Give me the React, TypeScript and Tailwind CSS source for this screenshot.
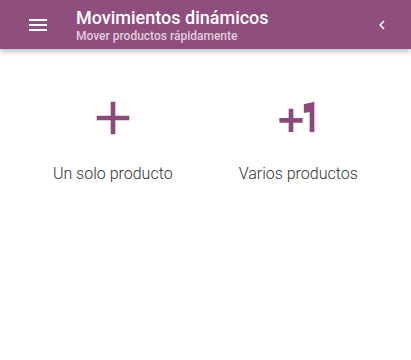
import React from "react";

function MenuIcon() {
  return (
    <svg width="24" height="24" viewBox="0 0 24 24" fill="white">
      <path d="M3 18h18v-2H3v2zm0-5h18v-2H3v2zm0-7v2h18V6H3z" />
    </svg>
  );
}

function ChevronLeft() {
  return (
    <svg width="18" height="18" viewBox="0 0 24 24" fill="white">
      <path d="M15.41 7.41L14 6l-6 6 6 6 1.41-1.41L10.83 12z" />
    </svg>
  );
}

function AddIcon() {
  return (
    <svg width="56" height="56" viewBox="0 0 24 24" fill="#8c4a7c">
      <path d="M19 13h-6v6h-2v-6H5v-2h6V5h2v6h6v2z" />
    </svg>
  );
}

function PlusOneIcon() {
  return (
    <svg width="56" height="56" viewBox="0 0 24 24" fill="#8c4a7c">
      <path d="M10 8H8v4H4v2h4v4h2v-4h4v-2h-4zm4.5-1.92V9.9l2.5-.5V18h2V5z" />
    </svg>
  );
}

export default function App() {
  return (
    <div
      className="w-[411px] h-[360px] bg-white overflow-hidden"
      style={{ fontFamily: "Roboto, 'Noto Sans', sans-serif" }}
    >
      <header className="h-[49px] bg-[#8e4f7e] flex items-center shadow-[0_2px_6px_rgba(0,0,0,0.3)] relative z-10">
        <div className="pl-[26px] flex items-center">
          <MenuIcon />
        </div>
        <div className="ml-[26px] flex flex-col flex-1">
          <div className="text-white text-[18px] font-medium leading-[20px] mt-[1px]">
            Movimientos dinámicos
          </div>
          <div className="text-[#e3cbdc] text-[12px] font-medium leading-[14px] mt-[1px]">
            Mover productos rápidamente
          </div>
        </div>
        <div className="pr-[20px] flex items-center">
          <ChevronLeft />
        </div>
      </header>
      <div className="grid grid-cols-2 px-5 pt-[41px]">
        <div className="flex flex-col items-center">
          <AddIcon />
          <div className="mt-[16px] text-[16px] leading-[24px] font-light text-[#333333]">
            Un solo producto
          </div>
        </div>
        <div className="flex flex-col items-center">
          <PlusOneIcon />
          <div className="mt-[16px] text-[16px] leading-[24px] font-light text-[#333333]">
            Varios productos
          </div>
        </div>
      </div>
    </div>
  );
}
